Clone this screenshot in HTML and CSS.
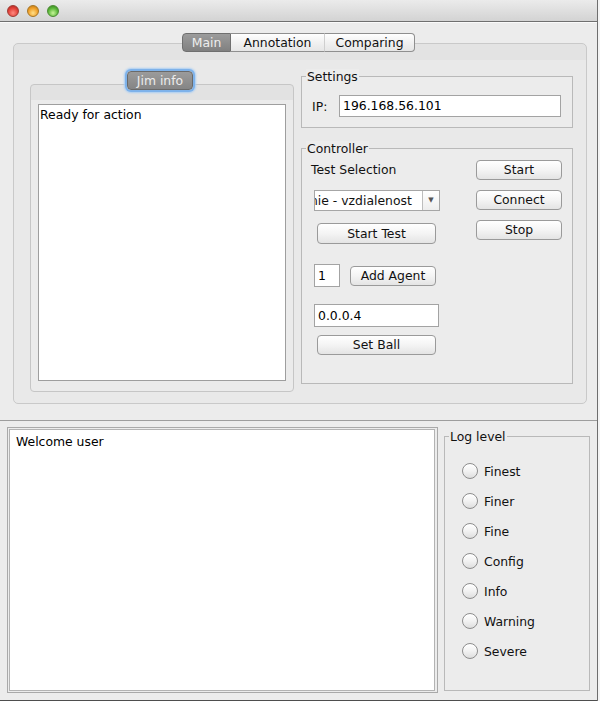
FILE: index.html
```html
<!DOCTYPE html>
<html>
<head>
<meta charset="utf-8">
<link rel="stylesheet" href="styles.css">
</head>
<body>
<div class="window">
  <div class="titlebar">
    <span class="light red"></span>
    <span class="light yellow"></span>
    <span class="light green"></span>
  </div>
  <div class="top-pane">
    <div class="tabs">
      <span class="tab tab-main">Main</span>
      <span class="tab tab-ann">Annotation</span>
      <span class="tab tab-cmp">Comparing</span>
    </div>
    <div class="tab-content">
      <div class="left-col">
        <div class="jim-header"><span class="jim-btn">Jim info</span></div>
        <div class="jim-panel">
          <div class="textarea jim-text">Ready for action</div>
        </div>
      </div>
      <div class="right-col">
        <div class="group settings">
          <div class="group-title">Settings</div>
          <div class="ip-row">
            <span class="ip-label">IP:</span>
            <span class="field ip-field">196.168.56.101</span>
          </div>
        </div>
        <div class="group controller">
          <div class="group-title">Controller</div>
          <div class="ctrl-body">
            <div class="ctrl-left">
              <div class="test-sel">Test Selection</div>
              <div class="combo">
                <span class="combo-text"><span class="combo-val">nie - vzdialenost</span></span>
                <span class="combo-arrow">▼</span>
              </div>
              <span class="btn start-test">Start Test</span>
              <div class="agent-row">
                <span class="field agent-field">1</span>
                <span class="btn add-agent">Add Agent</span>
              </div>
              <span class="field ball-field">0.0.0.4</span>
              <span class="btn set-ball">Set Ball</span>
            </div>
            <div class="ctrl-right">
              <span class="btn side-btn">Start</span>
              <span class="btn side-btn">Connect</span>
              <span class="btn side-btn">Stop</span>
            </div>
          </div>
        </div>
      </div>
    </div>
  </div>
  <div class="bottom-pane">
    <div class="scroll">
      <div class="textarea log-text">Welcome user</div>
    </div>
    <div class="group log-group">
      <div class="group-title">Log level</div>
      <div class="radios">
        <div class="radio"><span class="circle"></span>Finest</div>
        <div class="radio"><span class="circle"></span>Finer</div>
        <div class="radio"><span class="circle"></span>Fine</div>
        <div class="radio"><span class="circle"></span>Config</div>
        <div class="radio"><span class="circle"></span>Info</div>
        <div class="radio"><span class="circle"></span>Warning</div>
        <div class="radio"><span class="circle"></span>Severe</div>
      </div>
    </div>
  </div>
</div>
</body>
</html>
```
FILE: styles.css
```css
* { box-sizing: border-box; }
html, body { margin: 0; padding: 0; background: #f4f4f4; }
body {
  font-family: "DejaVu Sans", "Liberation Sans", sans-serif;
  font-size: 12.4px;
  color: #111;
}
.window {
  width: 598px;
  height: 701px;
  background: #ececec;
  border-right: 1px solid #6e6e6e;
  display: flex;
  flex-direction: column;
}
.titlebar {
  height: 22px;
  flex: none;
  background: linear-gradient(#ebebeb, #d3d3d3);
  border-bottom: 1px solid #6f6f6f;
  display: flex;
  align-items: center;
  padding-left: 7px;
  gap: 8px;
}
.light {
  width: 12px;
  height: 12px;
  border-radius: 50%;
  display: block;
  margin-top: 1px;
}
.red { background: radial-gradient(circle at 50% 70%, #ff8a80 0%, #e3423a 55%, #a8231c 100%); border: 1px solid #9e3a33; }
.yellow { background: radial-gradient(circle at 50% 70%, #ffe08a 0%, #f0a12a 55%, #b9720f 100%); border: 1px solid #a77625; }
.green { background: radial-gradient(circle at 50% 70%, #c8f59a 0%, #5cb83b 55%, #2f7d1a 100%); border: 1px solid #4b8a33; }

.top-pane {
  height: 398px;
  flex: none;
  padding: 10px 10px 0 13px;
  border-top: 1px solid #fafafa;
}
.tabs {
  display: flex;
  justify-content: center;
  height: 19px;
  margin-bottom: -9px;
  position: relative;
  z-index: 1;
  padding-right: 3px;
}
.tab {
  height: 19px;
  line-height: 17px;
  text-align: center;
  border: 1px solid #8f8f8f;
  background: linear-gradient(#ffffff, #f1f1f1 50%, #e6e6e6);
  color: #111;
}
.tab-main {
  width: 49px;
  border-radius: 4px 0 0 4px;
  background: linear-gradient(#9c9c9c, #808080);
  border-color: #6f6f6f;
  color: #eeeeee;
}
.tab-ann { width: 94px; border-left: none; border-right: 1px solid #cfcfcf; }
.tab-cmp { width: 90px; border-left: none; border-radius: 0 4px 4px 0; }

.tab-content {
  height: 361px;
  border: 1px solid #c9c9c9;
  border-radius: 5px;
  background: linear-gradient(#e3e3e3 0, #e3e3e3 16px, #e9e9e9 16px, #e9e9e9);
  display: flex;
  padding-left: 16px;
  gap: 7px;
}
.left-col {
  padding-top: 24px;
  display: flex;
  flex-direction: column;
  align-items: center;
  width: 264px;
}
.jim-header {
  height: 25px;
  padding: 3px;
  position: relative;
  z-index: 1;
  margin-left: -4px;
}
.jim-btn {
  display: block;
  height: 19px;
  line-height: 17px;
  padding: 0 9px;
  border-radius: 4px;
  background: linear-gradient(#9b9b9b, #858585);
  color: #ececec;
  border: 1px solid #6a6a6a;
  box-shadow: 0 0 0 2px #7eb2ea, 0 0 2px 3px #a9cdf3;
}
.jim-panel {
  margin-top: -9px;
  width: 264px;
  height: 308px;
  border: 1px solid #c6c6c6;
  border-radius: 4px;
  background: linear-gradient(#e2e2e2 0, #e2e2e2 15px, #ebebeb 15px);
  padding: 19px 7px 0 7px;
}
.textarea {
  background: #fff;
  border: 1px solid #9e9e9e;
  color: #000;
}
.jim-text {
  height: 277px;
  padding: 2px 1px;
}

.right-col {
  width: 272px;
  padding-top: 32px;
  display: flex;
  flex-direction: column;
}
.group {
  border: 1px solid #b9b9b9;
  background: #ececec;
}
.group-title {
  display: block;
  width: max-content;
  line-height: 15px;
  height: 15px;
  margin-top: -8px;
  margin-left: 4px;
  padding: 0 1px;
  background: #ececec;
  color: #111;
}
.settings { height: 52px; }
.ip-row {
  display: flex;
  align-items: center;
  margin-top: 11px;
  padding-left: 10px;
  gap: 10px;
}
.ip-label { width: 17px; }
.field {
  display: block;
  background: #fff;
  border: 1px solid #a3a3a3;
  height: 22px;
  line-height: 20px;
  padding-left: 3px;
  color: #000;
}
.ip-field { width: 222px; }

.controller {
  margin-top: 20px;
  height: 236px;
}
.ctrl-body {
  display: flex;
  justify-content: space-between;
  padding-right: 10px;
}
.ctrl-left {
  display: flex;
  flex-direction: column;
  align-items: flex-start;
  padding-left: 12px;
}
.test-sel {
  margin-top: 6px;
  margin-left: -3px;
  line-height: 15px;
}
.combo {
  margin-top: 13px;
  width: 126px;
  height: 21px;
  display: flex;
  border: 1px solid #a6a6a6;
  background: #fff;
}
.combo-text {
  flex: 1;
  overflow: hidden;
  line-height: 19px;
  white-space: nowrap;
}
.combo-val {
  display: inline-block;
  margin-left: -5px;
}
.combo-arrow {
  width: 17px;
  flex: none;
  border-left: 1px solid #bdbdbd;
  background: linear-gradient(#ffffff, #ededed);
  font-size: 7px;
  color: #555;
  text-align: center;
  line-height: 19px;
}
.btn {
  display: block;
  height: 20px;
  line-height: 18px;
  text-align: center;
  border: 1px solid #9a9a9a;
  border-radius: 4px;
  background: linear-gradient(#ffffff, #f4f4f4 50%, #e4e4e4);
  color: #111;
}
.start-test {
  margin-top: 12px;
  margin-left: 3px;
  width: 119px;
  height: 21px;
  line-height: 19px;
}
.agent-row {
  display: flex;
  align-items: center;
  gap: 10px;
  margin-top: 20px;
}
.agent-field { width: 26px; height: 23px; line-height: 21px; }
.add-agent { width: 86px; }
.ball-field {
  margin-top: 17px;
  width: 125px;
  height: 23px;
  line-height: 21px;
}
.set-ball {
  margin-top: 8px;
  margin-left: 3px;
  width: 119px;
}
.ctrl-right {
  display: flex;
  flex-direction: column;
  gap: 10px;
  padding-top: 4px;
}
.side-btn { width: 86px; height: 20px; }

.bottom-pane {
  flex: 1;
  border-top: 1px solid #9d9d9d;
  border-bottom: 1px solid #4e4e4e;
  display: flex;
  padding: 6px 0 0 7px;
  gap: 6px;
}
.scroll {
  width: 431px;
  height: 266px;
  border: 1px solid #a9a9a9;
  padding: 1px 2px 1px 1px;
}
.log-text {
  height: 100%;
  border-color: #b3b3b3;
  padding: 4px 6px;
}
.log-group {
  margin-top: 9px;
  width: 146px;
  height: 255px;
}
.radios {
  padding: 12px 0 0 17px;
  display: flex;
  flex-direction: column;
}
.radio {
  height: 30px;
  display: flex;
  align-items: center;
  gap: 6px;
}
.circle {
  width: 16px;
  height: 16px;
  border-radius: 50%;
  border: 1px solid #8c8c8c;
  background: linear-gradient(#ffffff, #f2f2f2 50%, #dedede);
  box-shadow: inset 0 1px 0 #fff;
}
```
